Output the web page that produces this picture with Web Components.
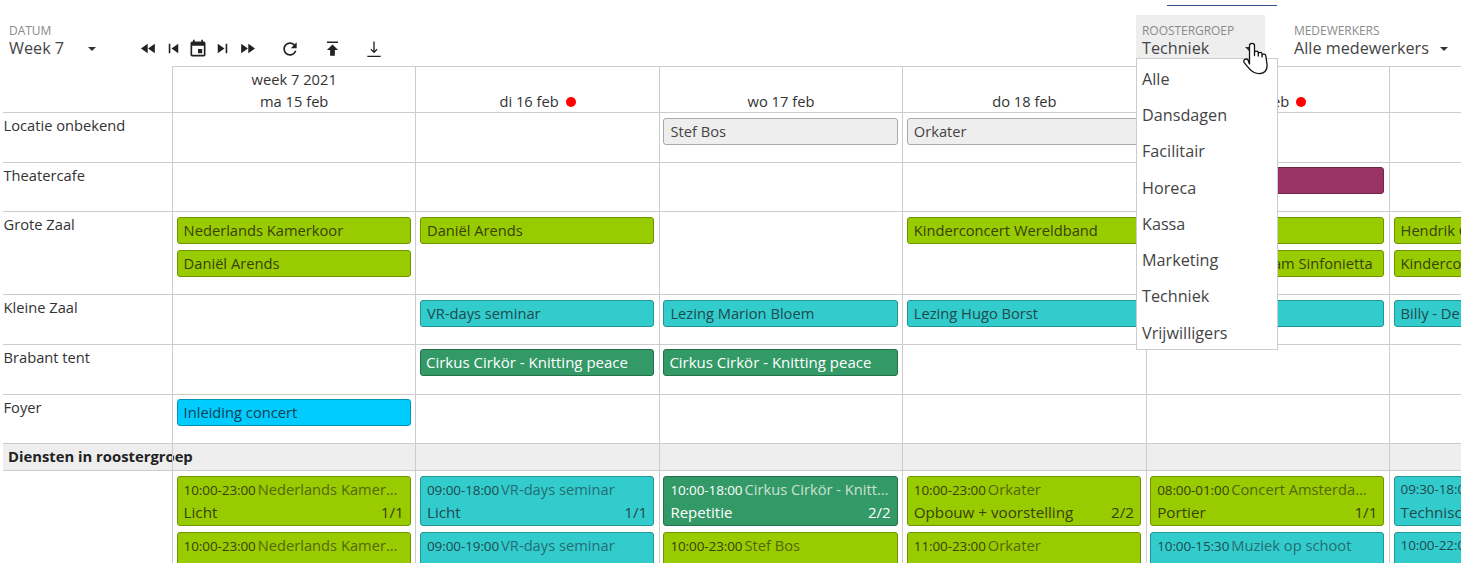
<!DOCTYPE html>
<html lang="nl"><head><meta charset="utf-8"><title>Rooster</title>
<style>
html,body{margin:0;height:563px;overflow:hidden;background:#fff;font-family:"Open Sans","Noto Sans",sans-serif;color:#333}
</style></head><body>
<x-app></x-app>
<script>
const ICONS={
 rew:'<path d="M11 18V6l-8.5 6 8.5 6zm.5-6l8.5 6V6l-8.5 6z"/>',
 prev:'<path d="M6 6h2v12H6zm3.5 6l8.5 6V6z"/>',
 event:'<path d="M17 12h-5v5h5v-5zM16 1v2H8V1H6v2H5c-1.11 0-1.99.9-1.99 2L3 19c0 1.1.89 2 2 2h14c1.1 0 2-.9 2-2V5c0-1.1-.9-2-2-2h-1V1h-2zm3 18H5V8h14v11z"/>',
 next:'<path d="M6 18l8.5-6L6 6v12zM16 6v12h2V6h-2z"/>',
 ff:'<path d="M4 18l8.5-6L4 6v12zm9-12v12l8.5-6L13 6z"/>',
 refresh:'<path d="M17.65 6.35C16.2 4.9 14.21 4 12 4c-4.42 0-7.99 3.58-7.99 8s3.57 8 7.99 8c3.73 0 6.84-2.55 7.73-6h-2.08c-.82 2.33-3.04 4-5.65 4-3.31 0-6-2.69-6-6s2.69-6 6-6c1.66 0 3.14.69 4.22 1.78L13 11h7V4l-2.35 2.35z"/>',
 up:'<path d="M5 3v2h14V3H5zm0 11h4v7h6v-7h4l-7-7-7 7z"/>',
 down:'<path d="M11.2 3h1.6v11.2l2.4-2.4 1 1L12 17.2l-4.2-4.4 1-1 2.4 2.4zM4 20h16v1.5H4z"/>'
};
class XIcon extends HTMLElement{
 connectedCallback(){
  const s=this.getAttribute('size')||19;
  this.attachShadow({mode:'open'}).innerHTML=`<style>:host{display:flex;align-items:center;justify-content:center;width:24.75px;height:25px;color:#222}svg{display:block;flex:none;fill:currentColor}</style><svg width="${s}" height="${s}" viewBox="0 0 24 24">${ICONS[this.getAttribute('name')]}</svg>`;
 }
}
class XField extends HTMLElement{
 connectedCallback(){
  const a=n=>this.getAttribute(n);
  this.attachShadow({mode:'open'}).innerHTML=`<style>
  :host{display:block;box-sizing:border-box;height:43px;padding:8px 6px 0;width:${a('w')}px;background:${a('bg')||'transparent'}}
  .l{font-size:12px;line-height:16px;color:#8a8a8a;letter-spacing:-.05px}
  .v{display:flex;align-items:center;font-size:16.2px;line-height:20px;color:#444;margin-top:-1px}
  .t{width:${a('tw')}px;white-space:nowrap}
  .c{width:0;height:0;border:4px solid transparent;border-top-color:#333;border-bottom:0;margin-top:1px}
  </style><div class="l">${a('label')}</div><div class="v"><span class="t">${a('value')}</span><span class="c"></span></div>`;
 }
}
class XToolbar extends HTMLElement{
 connectedCallback(){
  this.attachShadow({mode:'open'}).innerHTML=`<style>
  :host{display:flex;height:60px;box-sizing:border-box;padding:9px 0 0 3px;align-items:flex-start}
  .g{display:flex;align-items:center;margin-top:21px}
  .sp{flex:1}
  .m{margin-left:17.25px}
  .m.f{margin-left:18px}
  .fields{display:flex;gap:23px}
  </style>
  <x-field w="133" label="DATUM" value="Week 7" tw="79"></x-field>
  <div class="g"><x-icon name="rew"></x-icon><x-icon name="prev"></x-icon><x-icon name="event" size="20"></x-icon><x-icon name="next"></x-icon><x-icon name="ff"></x-icon>
  <x-icon class="m f" name="refresh" size="20"></x-icon><x-icon class="m" name="up" size="19"></x-icon><x-icon class="m" name="down" size="20"></x-icon></div>
  <div class="sp"></div>
  <div class="fields"><x-field w="129" bg="#eeeeee" label="ROOSTERGROEP" value="Techniek" tw="103"></x-field><x-field w="173" label="MEDEWERKERS" value="Alle medewerkers" tw="146"></x-field></div>`;
 }
}
const COL={g:['#99cc00','#6f9400','#37410a'],t:['#33cccc','#239494','#1f4a4f'],d:['#339966','#247049','#fff'],b:['#00ccff','#0094ba','#123f4f'],p:['#993366','#702549','#fff'],x:['#eeeeee','#a8a8a8','#444']};
class XEvent extends HTMLElement{
 connectedCallback(){
  const c=COL[this.getAttribute('c')];
  this.attachShadow({mode:'open'}).innerHTML=`<style>
  :host{display:block;box-sizing:border-box;height:27px;margin-bottom:6px;padding:0 6px;border:1px solid ${c[1]};border-radius:3px;background:${c[0]};color:${c[2]};font-size:14.7px;line-height:25px;white-space:nowrap;overflow:hidden}
  :host([c=d]){padding-left:5px;font-size:15px;font-weight:500}
  </style><slot></slot>`;
 }
}
class XDuty extends HTMLElement{
 connectedCallback(){
  const a=n=>this.getAttribute(n)||'';
  const c=COL[a('c')];
  this.attachShadow({mode:'open'}).innerHTML=`<style>
  :host{display:block;box-sizing:border-box;height:50px;margin-bottom:6px;padding:0 6px;border:1px solid ${c[1]};border-radius:3px;background:${c[0]};color:${c[2]};white-space:nowrap;overflow:hidden}
  .a{display:flex;align-items:baseline;height:24px;line-height:24px}
  .tm{font-size:13.5px;letter-spacing:-.1px;margin-right:2px;flex:none}
  .ti{font-size:14.7px;opacity:.72;overflow:hidden;text-overflow:ellipsis;flex:1;min-width:0}
  .b{display:flex;justify-content:space-between;font-size:15.2px;line-height:22px}
  :host([c=d]) .tm{font-weight:500;letter-spacing:-.1px}:host([c=d]) .b{font-weight:500;font-size:15px}
  </style><div class="a"><span class="tm">${a('time')}</span><span class="ti">${a('title')}</span></div><div class="b"><span>${a('job')}</span><span>${a('n')}</span></div>`;
 }
}
class XCell extends HTMLElement{
 connectedCallback(){
  this.attachShadow({mode:'open'}).innerHTML=`<style>
  :host{display:block;box-sizing:border-box;min-width:0;border-top:1px solid #cccccc;border-left:1px solid #cccccc;padding:var(--p,5px) 4.6px 0 3.6px;overflow:hidden}
  :host([lab]){border-left:0;padding:0 0 0 .5px;font-size:14.7px;line-height:24.6px;color:#333}
  :host([head]){padding:0;display:flex;flex-direction:column;justify-content:flex-end;align-items:center;font-size:14.7px;line-height:22px;color:#333}
  :host([blank]){border-top:0;border-left:0}
  :host([sec]){background:transparent;padding:0}
  </style><slot></slot>`;
 }
}
class XSection extends HTMLElement{
 connectedCallback(){
  this.attachShadow({mode:'open'}).innerHTML=`<style>
  :host{display:block;grid-column:1/-1;grid-row:8;background:#eeeeee;border-top:1px solid #ccc;box-sizing:border-box;padding-left:5px;font-weight:700;font-size:14.8px;line-height:25px;color:#222;white-space:nowrap}
  </style><slot></slot>`;
 }
}
class XDay extends HTMLElement{
 connectedCallback(){
  const dot=this.hasAttribute('dot');
  this.attachShadow({mode:'open'}).innerHTML=`<style>
  :host{display:block;white-space:nowrap}
  i{display:inline-block;width:10px;height:10px;border-radius:50%;background:#ff0000;margin-left:7px;vertical-align:.5px}
  </style><slot></slot>${dot?'<i></i>':''}`;
 }
}
class XRoster extends HTMLElement{
 connectedCallback(){
  const days=[['ma 15 feb',0],['di 16 feb',1],['wo 17 feb',0],['do 18 feb',0],['vr 19 feb',1],['za 20 feb',0]];
  const rows=[
   ['Locatie onbekend',6,[[],[],[['x','Stef Bos']],[['x','Orkater']],[],[]]],
   ['Theatercafe',5,[[],[],[],[],[['p','']],[]]],
   ['Grote Zaal',6,[[['g','Nederlands Kamerkoor'],['g','Daniël Arends']],[['g','Daniël Arends']],[],[['g','Kinderconcert Wereldband']],[['g',''],['g','Concert Amsterdam Sinfonietta']],[['g','Hendrik G'],['g','Kinderconcert Wereldband']]]],
   ['Kleine Zaal',6,[[],[['t','VR-days seminar']],[['t','Lezing Marion Bloem']],[['t','Lezing Hugo Borst']],[['t','Muziek op schoot']],[['t','Billy - De']]]],
   ['Brabant tent',5,[[],[['d','Cirkus Cirkör - Knitting peace']],[['d','Cirkus Cirkör - Knitting peace']],[],[],[]]],
   ['Foyer',5,[[['b','Inleiding concert']],[],[],[],[],[]]]
  ];
  const duties=[
   [['g','10:00-23:00','Nederlands Kamerkoor','Licht','1/1'],['g','10:00-23:00','Nederlands Kamerkoor','Techniek','1/1']],
   [['t','09:00-18:00','VR-days seminar','Licht','1/1'],['t','09:00-19:00','VR-days seminar','Geluid','1/1']],
   [['d','10:00-18:00','Cirkus Cirkör - Knitting peace','Repetitie','2/2'],['g','10:00-23:00','Stef Bos','Opbouw + voorstelling','1/1']],
   [['g','10:00-23:00','Orkater','Opbouw + voorstelling','2/2'],['g','11:00-23:00','Orkater','Opbouw + voorstelling','1/1']],
   [['g','08:00-01:00','Concert Amsterdam Sinfonietta','Portier','1/1'],['t','10:00-15:30','Muziek op schoot','Licht','1/1']],
   [['t','09:30-18:00','','Technisch','1/1'],['t','10:00-22:00','','Techniek','1/1']]
  ];
  let h='<x-cell head blank></x-cell>';
  days.forEach((d,i)=>{h+=`<x-cell head>${i==0?'<x-day>week 7 2021</x-day>':''}<x-day ${d[1]?'dot':''}>${d[0]}</x-day></x-cell>`});
  rows.forEach(r=>{
   h+=`<x-cell lab>${r[0]}</x-cell>`;
   r[2].forEach(c=>{h+=`<x-cell style="--p:${r[1]-1}px">${c.map(e=>`<x-event c="${e[0]}">${e[1]}</x-event>`).join('')}</x-cell>`});
  });
  h+='<x-section>Diensten in roostergroep</x-section>';
  for(let i=0;i<6;i++)h+=`<x-cell sec style="grid-row:8;grid-column:${i+2}"></x-cell>`;
  h+='<x-cell lab></x-cell>';
  duties.forEach(c=>{h+=`<x-cell>${c.map(e=>`<x-duty c="${e[0]}" time="${e[1]}" title="${e[2]}" job="${e[3]}" n="${e[4]}"></x-duty>`).join('')}</x-cell>`});
  this.attachShadow({mode:'open'}).innerHTML=`<style>
  :host{display:block;margin-left:3px;height:497px;overflow:hidden}
  .g{display:grid;width:max-content;grid-template-columns:169px repeat(6,243.4px);grid-template-rows:46px 50px 49px 83px 50px 50px 49px 27px 100px}
  </style><div class="g">${h}</div>`;
 }
}
class XDropdown extends HTMLElement{
 connectedCallback(){
  const items=['Alle','Dansdagen','Facilitair','Horeca','Kassa','Marketing','Techniek','Vrijwilligers'];
  this.attachShadow({mode:'open'}).innerHTML=`<style>
  :host{display:block;position:absolute;left:1136px;top:58px;width:142px;height:292px;box-sizing:border-box;background:#fff;border:1px solid #cccccc;padding:2px 0 0 5px;font-size:16.2px;color:#444}
  div{height:36.24px;line-height:36.24px}
  </style>${items.map(i=>`<div>${i}</div>`).join('')}`;
 }
}
class XCursor extends HTMLElement{
 connectedCallback(){
  this.attachShadow({mode:'open'}).innerHTML=`<style>:host{display:block;position:absolute;left:1243px;top:42px;width:26px;height:33px}svg{display:block}</style>
  <svg width="26" height="33" viewBox="0 0 26 33"><path d="M6.5 22V3.5C6.5 .6 11.5 .6 11.5 3.5V13.5V11C11.5 8.6 15.3 8.6 15.3 11V14V12C15.3 9.8 19 9.8 19 12V15V13.5C19 11.6 22.6 11.6 22.8 13.8L24 22C24.6 27.5 22 31.6 16.5 31.6C11.5 31.6 8.6 29.6 6 26.4L1.2 20.6C-.2 18.2 2.6 16 4.8 17.6Z" fill="#fff" stroke="#111" stroke-width="1.3" stroke-linejoin="round"/></svg>`;
 }
}
class XApp extends HTMLElement{
 connectedCallback(){
  this.attachShadow({mode:'open'}).innerHTML=`<style>
  :host{display:block;position:relative;width:1461px;height:563px;overflow:hidden}
  .tab{margin:5px 0 0 1167px;width:110px;height:1px;background:#34508f}
  </style><div class="tab"></div><x-toolbar></x-toolbar><x-roster></x-roster><x-dropdown></x-dropdown><x-cursor></x-cursor>`;
 }
}
customElements.define('x-icon',XIcon);
customElements.define('x-field',XField);
customElements.define('x-toolbar',XToolbar);
customElements.define('x-event',XEvent);
customElements.define('x-duty',XDuty);
customElements.define('x-cell',XCell);
customElements.define('x-section',XSection);
customElements.define('x-day',XDay);
customElements.define('x-roster',XRoster);
customElements.define('x-dropdown',XDropdown);
customElements.define('x-cursor',XCursor);
customElements.define('x-app',XApp);
</script>
</body></html>
